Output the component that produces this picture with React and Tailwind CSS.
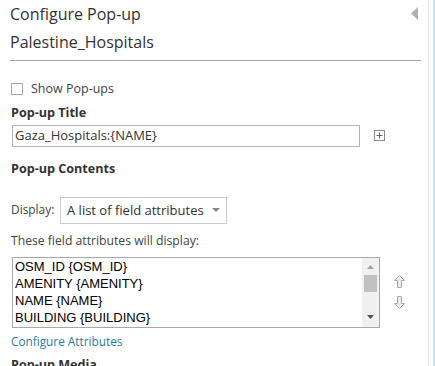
import React from "react";

const sans = { fontFamily: '"Open Sans", "Noto Sans", sans-serif' };

function UpArrow() {
  return (
    <svg width="11" height="13" viewBox="0 0 11 13">
      <polygon points="5.5,0.5 10.5,5.5 7.5,5.5 7.5,12.5 3.5,12.5 3.5,5.5 0.5,5.5" fill="#ececec" stroke="#a8a8a8" strokeWidth="1" />
    </svg>
  );
}
function DownArrow() {
  return (
    <svg width="11" height="13" viewBox="0 0 11 13">
      <polygon points="5.5,12.5 10.5,7.5 7.5,7.5 7.5,0.5 3.5,0.5 3.5,7.5 0.5,7.5" fill="#ececec" stroke="#a8a8a8" strokeWidth="1" />
    </svg>
  );
}

export default function App() {
  const items = ["OSM_ID {OSM_ID}", "AMENITY {AMENITY}", "NAME {NAME}", "BUILDING {BUILDING}"];
  return (
    <div className="w-[435px] h-[366px] overflow-hidden bg-white flex text-[#333]" style={sans}>
      <div className="w-[429px] h-full border-r border-[#e6e6e6] pl-[10px] pr-[7px] flex flex-col">
        <div className="border-b border-[#a6a6a6] pb-[7px]">
          <div className="flex items-start justify-between pt-[4px] h-[25px]">
            <span className="text-[16px] leading-[21px] text-[#333]">Configure Pop-up</span>
            <svg width="7" height="13" viewBox="0 0 7 13" className="mt-[3px] mr-[3px]">
              <polygon points="7,0 7,13 0,6.5" fill="#b0b0b0" />
            </svg>
          </div>
          <div className="mt-[7px] text-[16px] leading-[21px] text-[#333]">Palestine_Hospitals</div>
        </div>

        <div className="mt-[19px] h-[20px] flex items-center pl-[1px]">
          <div className="w-[12px] h-[12px] border border-[#a9a9a9] bg-white" />
          <span className="ml-[8px] text-[12.5px] text-[#444]">Show Pop-ups</span>
        </div>

        <div className="mt-[7px] h-[16px] flex items-center pl-[1px] text-[12.6px] font-bold text-[#333]">Pop-up Title</div>

        <div className="mt-[3px] flex items-center">
          <div className="ml-[2px] w-[348px] h-[22px] border border-[#b4b4b4] flex items-center pl-[2px] text-[13px] text-[#333]">
            Gaza_Hospitals:{"{NAME}"}
          </div>
          <svg width="11" height="11" viewBox="0 0 11 11" className="ml-[14px]">
            <rect x="0.5" y="0.5" width="10" height="10" fill="white" stroke="#8c8c8c" />
            <line x1="5.5" y1="2.5" x2="5.5" y2="8.5" stroke="#666" />
            <line x1="2.5" y1="5.5" x2="8.5" y2="5.5" stroke="#666" />
          </svg>
        </div>

        <div className="mt-[15px] h-[16px] flex items-center pl-[1px] text-[12.6px] font-bold text-[#333]">Pop-up Contents</div>

        <div className="mt-[19px] h-[27px] flex items-center pl-[1px]">
          <span className="w-[44px] text-[11.9px] text-[#444] whitespace-nowrap">Display:</span>
          <div className="ml-[5px] w-[167px] h-[27px] border border-[#cccccc] flex items-center justify-between pl-[6px] pr-[6px]">
            <span className="text-[13px] text-[#333]">A list of field attributes</span>
            <svg width="8" height="4" viewBox="0 0 8 4">
              <polygon points="0,0 8,0 4,4" fill="#8a8a8a" />
            </svg>
          </div>
        </div>

        <div className="mt-[9px] h-[16px] flex items-center pl-[1px] text-[12.2px] text-[#444]">These field attributes will display:</div>

        <div className="mt-[8px] flex items-center">
          <div className="ml-[2px] w-[368px] h-[71px] border border-[#a9a9a9] flex">
            <div className="flex-1 pl-[2px] pt-[0px]" style={{ fontFamily: '"Liberation Sans", Arial, sans-serif' }}>
              {items.map((t) => (
                <div key={t} className="text-[13px] leading-[17px] text-black">{t}</div>
              ))}
            </div>
            <div className="w-[17px] h-full bg-[#f0f0f0] flex flex-col items-center">
              <svg width="7" height="4" viewBox="0 0 7 4" className="mt-[7px]">
                <polygon points="0,4 7,4 3.5,0" fill="#a3a3a3" />
              </svg>
              <div className="mt-[6px] w-[13px] h-[17px] bg-[#c1c1c1]" />
              <div className="flex-1" />
              <svg width="7" height="4" viewBox="0 0 7 4" className="mb-[8px]">
                <polygon points="0,0 7,0 3.5,4" fill="#505050" />
              </svg>
            </div>
          </div>
          <div className="ml-[14px] flex flex-col gap-[8px]">
            <UpArrow />
            <DownArrow />
          </div>
        </div>

        <div className="mt-[6px] h-[16px] flex items-center pl-[1px] text-[11.8px] text-[#2b7dab]">Configure Attributes</div>

        <div className="mt-[8px] h-[16px] flex items-center pl-[1px] text-[12.6px] font-bold text-[#333]">Pop-up Media</div>
      </div>
      <div className="w-[4px] h-full bg-white" />
      <div className="w-[2px] h-full bg-[#c8e6f7]" />
    </div>
  );
}
